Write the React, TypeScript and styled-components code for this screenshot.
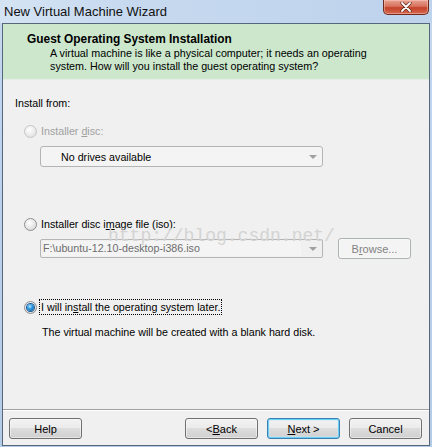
import React from "react";
import styled, { createGlobalStyle, css } from "styled-components";

const Global = createGlobalStyle`
  html, body { margin: 0; padding: 0; }
  body { width: 432px; height: 447px; overflow: hidden; background: #bcd2ec; }
  * { box-sizing: border-box; }
`;

const FONT = `"Liberation Sans", Arial, sans-serif`;

const Window = styled.div`
  width: 432px;
  height: 447px;
  display: flex;
  flex-direction: column;
  font-family: ${FONT};
  background: linear-gradient(180deg, #c4d8ef 0%, #bcd2ec 40%, #b4cbe6 100%);
`;

const TitleBar = styled.div`
  height: 23px;
  flex: none;
  display: flex;
  justify-content: space-between;
  align-items: flex-start;
  padding-left: 4px;
  background: linear-gradient(90deg, #d5e4f4 0%, #c6d9ef 30%, #bed3ec 100%);
`;

const TitleText = styled.div`
  font-size: 13px;
  line-height: 13px;
  margin-top: 5px;
  color: #111;
`;

const CloseButton = styled.div`
  width: 46px;
  height: 15px;
  margin-right: 3px;
  border: 1px solid #6e2a1e;
  border-top: none;
  border-radius: 0 0 5px 5px;
  background: linear-gradient(180deg, #e8a393 0%, #d7725c 45%, #c4422a 55%, #d5694e 100%);
  box-shadow: inset 0 0 0 1px rgba(255, 210, 200, 0.45);
  display: flex;
  align-items: center;
  justify-content: center;
`;

const Client = styled.div`
  flex: 1;
  margin: 0 2px 1px 2px;
  border: 1px solid #56677b;
  background: #f0f0f0;
  display: flex;
  flex-direction: column;
`;

const Header = styled.div`
  height: 56px;
  flex: none;
  background: #cce7cc;
  border-bottom: 1px solid #e6ece6;
  padding: 9px 0 0 24px;
  color: #000;
`;

const HeaderTitle = styled.div`
  font-weight: bold;
  font-size: 11.9px;
  line-height: 13px;
  margin-bottom: 1px;
`;

const HeaderDesc = styled.div`
  font-size: 10.75px;
  line-height: 13px;
  padding-left: 23px;
  width: 380px;
`;

const Body = styled.div`
  flex: 1;
  position: relative;
  padding: 16px 0 0 12px;
  display: flex;
  flex-direction: column;
  font-size: 10.7px;
  color: #000;
`;

const Label = styled.div<{ $indent?: number; $top?: number }>`
  height: 14px;
  line-height: 14px;
  padding-left: ${(p) => p.$indent ?? 0}px;
  margin-top: ${(p) => p.$top ?? 0}px;
`;

const RadioRow = styled.div<{ $top: number; $disabled?: boolean }>`
  display: flex;
  align-items: center;
  height: 16px;
  margin-top: ${(p) => p.$top}px;
  padding-left: 9px;
  gap: 2px;
  color: ${(p) => (p.$disabled ? "#a0a0a0" : "#000")};
`;

const RadioCircle = styled.span<{ $checked?: boolean; $disabled?: boolean }>`
  width: 13px;
  height: 13px;
  border-radius: 50%;
  flex: none;
  border: 1px solid ${(p) => (p.$disabled ? "#c6c6c6" : "#8f8f8f")};
  background: ${(p) =>
    p.$disabled
      ? "radial-gradient(circle at 40% 35%, #ffffff 0%, #ececec 50%, #dadada 100%)"
      : "radial-gradient(circle at 40% 35%, #ffffff 0%, #e6e6e6 55%, #cfcfcf 100%)"};
  display: flex;
  align-items: center;
  justify-content: center;
  ${(p) =>
    p.$checked &&
    css`
      &::after {
        content: "";
        width: 7px;
        height: 7px;
        border-radius: 50%;
        background: radial-gradient(circle at 40% 35%, #b5e6ff 0%, #2f9ae0 40%, #0d4f8f 100%);
        box-shadow: 0 0 0 1px #1b5a94;
      }
    `}
`;

const RadioText = styled.span<{ $focus?: boolean }>`
  line-height: 14px;
  padding: 0 1px;
  border: 1px dotted ${(p) => (p.$focus ? "#000" : "transparent")};
`;

const U = styled.span`
  text-decoration: underline;
`;

const Combo = styled.div<{ $top: number }>`
  margin-top: ${(p) => p.$top}px;
  margin-left: 25px;
  width: 283px;
  height: 21px;
  border: 1px solid #b4b4b4;
  border-radius: 3px;
  background: #f4f4f4;
  display: flex;
  align-items: center;
  justify-content: space-between;
  padding: 0 5px 0 20px;
  color: #000;
`;

const Arrow = styled.span`
  width: 0;
  height: 0;
  border-left: 4px solid transparent;
  border-right: 4px solid transparent;
  border-top: 4px solid #a0a0a0;
  margin-top: 1px;
`;

const FileRow = styled.div<{ $top: number }>`
  margin-top: ${(p) => p.$top}px;
  margin-left: 25px;
  display: flex;
  align-items: center;
  gap: 15px;
  height: 21px;
`;

const FileInput = styled.div`
  width: 283px;
  height: 19px;
  border: 1px solid #b5b5b5;
  border-radius: 2px;
  background: #f0f0f0;
  display: flex;
  align-items: center;
  justify-content: space-between;
  padding: 0 5px 0 2px;
  color: #6d6d6d;
`;

const FileField = styled.span`
  flex: 1;
  height: 15px;
  line-height: 15px;
  background: #f4f4f4;
  margin-right: 8px;
`;

const Button = styled.div<{ $default?: boolean; $disabled?: boolean }>`
  width: 73px;
  height: 21px;
  border: 1px solid ${(p) => (p.$default ? "#3c7fb1" : p.$disabled ? "#adb2b5" : "#707070")};
  border-radius: 3px;
  font-size: 11px;
  font-family: ${FONT};
  color: ${(p) => (p.$disabled ? "#838383" : "#000")};
  display: flex;
  align-items: center;
  justify-content: center;
  background: ${(p) =>
    p.$disabled
      ? "#f4f4f4"
      : "linear-gradient(180deg, #f2f2f2 0%, #ebebeb 49%, #dddddd 50%, #cfcfcf 100%)"};
  box-shadow: ${(p) =>
    p.$default
      ? "inset 0 0 0 1px #6cd0f5, inset 0 0 0 2px #c4ecfb66"
      : "inset 0 0 0 1px #fcfcfc88"};
`;

const Watermark = styled.div`
  position: absolute;
  left: 105px;
  top: 146px;
  font-family: "Liberation Mono", "Courier New", monospace;
  font-size: 18px;
  color: #d4d4d4;
  pointer-events: none;
  white-space: nowrap;
`;

const Footer = styled.div`
  height: 36px;
  flex: none;
  border-top: 1px solid #a0a0a0;
  box-shadow: inset 0 1px 0 #ffffff;
  display: flex;
  align-items: flex-start;
  padding: 8px 7px 0 6px;
  gap: 9px;
`;

const Spacer = styled.div`
  flex: 1;
`;

export default function App() {
  return (
    <>
      <Global />
      <Window>
        <TitleBar>
          <TitleText>New Virtual Machine Wizard</TitleText>
          <CloseButton>
            <svg width="12" height="10" viewBox="0 0 12 10">
              <path d="M2 1 L10 9 M10 1 L2 9" stroke="#5a2418" strokeWidth="3.2" strokeLinecap="round" />
              <path d="M2 1 L10 9 M10 1 L2 9" stroke="#ffffff" strokeWidth="1.8" strokeLinecap="round" />
            </svg>
          </CloseButton>
        </TitleBar>
        <Client>
          <Header>
            <HeaderTitle>Guest Operating System Installation</HeaderTitle>
            <HeaderDesc>
              A virtual machine is like a physical computer; it needs an operating
              <br />
              system. How will you install the guest operating system?
            </HeaderDesc>
          </Header>
          <Body>
            <Label>Install from:</Label>
            <RadioRow $top={13} $disabled>
              <RadioCircle $disabled />
              <RadioText>
                Installer <U>d</U>isc:
              </RadioText>
            </RadioRow>
            <Combo $top={7}>
              <span>No drives available</span>
              <Arrow />
            </Combo>
            <RadioRow $top={49}>
              <RadioCircle />
              <RadioText>
                Installer disc i<U>m</U>age file (iso):
              </RadioText>
            </RadioRow>
            <FileRow $top={6}>
              <FileInput>
                <FileField>F:\ubuntu-12.10-desktop-i386.iso</FileField>
                <Arrow />
              </FileInput>
              <Button $disabled>
                B<U>r</U>owse...
              </Button>
            </FileRow>
            <RadioRow $top={40}>
              <RadioCircle $checked />
              <RadioText $focus>
                I will in<U>s</U>tall the operating system later.
              </RadioText>
            </RadioRow>
            <Label $indent={27} $top={10}>
              The virtual machine will be created with a blank hard disk.
            </Label>
            <Watermark>http://blog.csdn.net/</Watermark>
          </Body>
          <Footer>
            <Button>Help</Button>
            <Spacer />
            <Button>
              &lt; <U>B</U>ack
            </Button>
            <Button $default>
              <U>N</U>ext &gt;
            </Button>
            <Button>Cancel</Button>
          </Footer>
        </Client>
      </Window>
    </>
  );
}
